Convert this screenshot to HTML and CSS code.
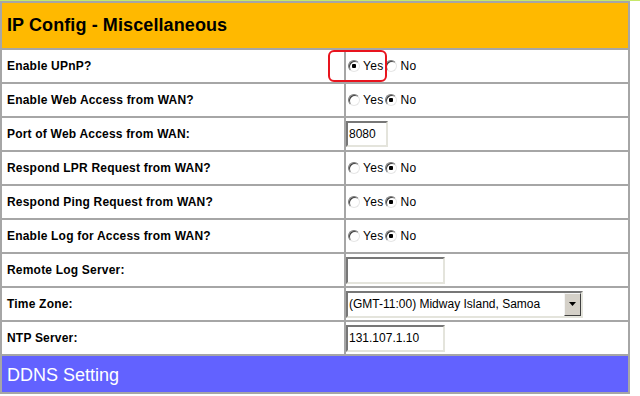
FILE: index.html
```html
<!DOCTYPE html>
<html>
<head>
<meta charset="utf-8">
<link rel="stylesheet" href="styles.css">
</head>
<body>
<div class="topline"></div>
<div class="cfg">
  <div class="head orange">IP Config - Miscellaneous</div>

  <div class="lbl">Enable UPnP?</div>
  <div class="val anno-wrap">
    <label class="opt"><input type="radio" name="upnp" checked>Yes</label><label class="opt"><input type="radio" name="upnp">No</label>
    <span class="anno"></span>
  </div>

  <div class="lbl">Enable Web Access from WAN?</div>
  <div class="val"><label class="opt"><input type="radio" name="web">Yes</label><label class="opt"><input type="radio" name="web" checked>No</label></div>

  <div class="lbl">Port of Web Access from WAN:</div>
  <div class="val"><input class="txt port" type="text" value="8080"></div>

  <div class="lbl">Respond LPR Request from WAN?</div>
  <div class="val"><label class="opt"><input type="radio" name="lpr">Yes</label><label class="opt"><input type="radio" name="lpr" checked>No</label></div>

  <div class="lbl">Respond Ping Request from WAN?</div>
  <div class="val"><label class="opt"><input type="radio" name="ping">Yes</label><label class="opt"><input type="radio" name="ping" checked>No</label></div>

  <div class="lbl">Enable Log for Access from WAN?</div>
  <div class="val"><label class="opt"><input type="radio" name="log">Yes</label><label class="opt"><input type="radio" name="log" checked>No</label></div>

  <div class="lbl">Remote Log Server:</div>
  <div class="val"><input class="txt wide" type="text" value=""></div>

  <div class="lbl">Time Zone:</div>
  <div class="val">
    <div class="select"><span class="sel-text">(GMT-11:00) Midway Island, Samoa</span><span class="sel-btn"><svg width="7" height="4" viewBox="0 0 7 4"><path d="M0 0H7L3.5 4Z" fill="#000"/></svg></span></div>
  </div>

  <div class="lbl">NTP Server:</div>
  <div class="val"><input class="txt wide" type="text" value="131.107.1.10"></div>

  <div class="head blue">DDNS Setting</div>
</div>
</body>
</html>
```
FILE: styles.css
```css
html, body {
  margin: 0;
  padding: 0;
  background: #fff;
}
body {
  font-family: "Liberation Sans", Arial, sans-serif;
  font-size: 12px;
  color: #000;
}
.topline {
  height: 1px;
  background: #c6e86a;
}
.cfg {
  width: 630px;
  box-sizing: border-box;
  padding: 2px;
  background: #a6a6a6;
  display: grid;
  grid-template-columns: 342px 282px;
  grid-template-rows: 45px repeat(9, 32px) 36px;
  gap: 2px;
}
.head {
  grid-column: 1 / 3;
  display: flex;
  align-items: center;
  padding-left: 5px;
  font-size: 18px;
}
.orange {
  background: #ffb900;
  font-weight: bold;
  letter-spacing: 0.1px;
}
.blue {
  background: #6262ff;
  color: #fff;
  padding-top: 3px;
}
.lbl {
  background: #fff;
  font-weight: bold;
  display: flex;
  align-items: center;
  padding-left: 5px;
  letter-spacing: 0.2px;
}
.val {
  background: #fff;
  display: flex;
  align-items: center;
  padding-left: 0;
}
.anno-wrap {
  position: relative;
}
.anno {
  position: absolute;
  left: -18px;
  top: 0;
  width: 55px;
  height: 28px;
  border: 2px solid #e8141e;
  border-radius: 6px;
}
.opt {
  display: inline-flex;
  align-items: center;
  color: #000;
  letter-spacing: 0.3px;
}
.opt input {
  -webkit-appearance: none;
  appearance: none;
  width: 12px;
  height: 12px;
  margin: 0 3px 0 2px;
  border-radius: 50%;
  box-sizing: border-box;
  border: 1px solid;
  border-color: #7a7a7a #e6e6e6 #e6e6e6 #7a7a7a;
  background: #fff;
  box-shadow: inset 1px 1px 0 #404040;
}
.opt input:checked {
  background: radial-gradient(circle at 50% 50%, #000 0, #000 2px, #fff 2.5px);
}
.opt + .opt input {
  margin-left: 2px;
}
.txt {
  box-sizing: border-box;
  height: 27px;
  margin: 0;
  padding: 0 1px;
  font-family: "Liberation Sans", Arial, sans-serif;
  font-size: 12px;
  color: #000;
  background: #fff;
  border: 2px solid;
  border-color: #777 #e4e4dc #e4e4dc #777;
  outline: none;
}
.port {
  width: 42px;
  height: 26px;
}
.wide {
  width: 99px;
}
.select {
  box-sizing: border-box;
  width: 237px;
  height: 27px;
  border: 2px solid;
  border-color: #777 #e4e4dc #e4e4dc #777;
  display: flex;
  align-items: stretch;
  background: #fff;
}
.sel-text {
  flex: 1;
  display: flex;
  align-items: center;
  padding-left: 1px;
}
.sel-btn {
  width: 15px;
  background: #d4d0c8;
  border: 1px solid;
  border-color: #f4f4f4 #404040 #404040 #f4f4f4;
  display: flex;
  align-items: center;
  justify-content: center;
}
```
